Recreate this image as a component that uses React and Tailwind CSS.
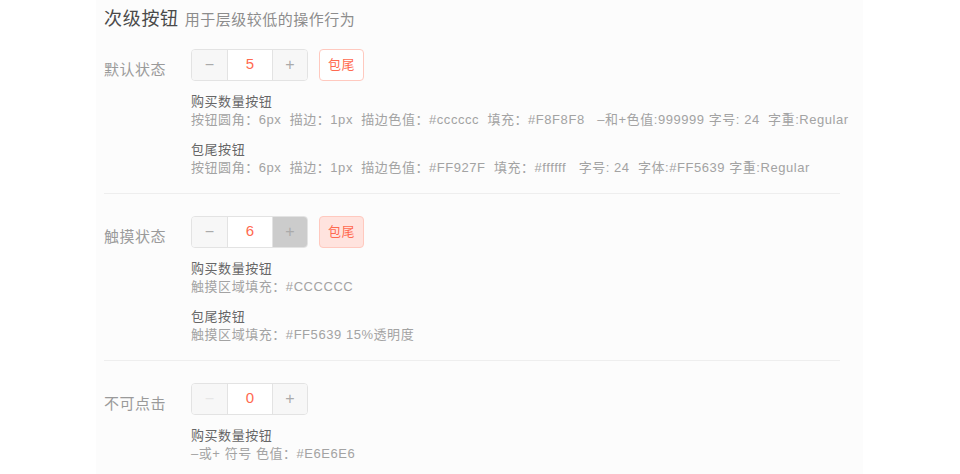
import React from "react";

const font = { fontFamily: '"Liberation Sans", "Noto Sans CJK SC", sans-serif' };

const Stepper = ({ value, hover, disabled }) => (
  <div className="flex h-[32px] w-[117px] rounded-[4px] border border-[#e3e3e3] overflow-hidden">
    <div className={`w-[36px] flex items-center justify-center bg-[#f7f7f7] border-r border-[#e3e3e3] text-[16px] ${disabled ? "text-[#e6e6e6]" : "text-[#aaaaaa]"}`}>−</div>
    <div className="flex-1 flex items-center justify-center bg-white text-[15px] text-[#ff6a50]">{value}</div>
    <div className={`w-[35px] flex items-center justify-center border-l border-[#e3e3e3] text-[16px] text-[#aaaaaa] ${hover ? "bg-[#cccccc]" : "bg-[#f7f7f7]"}`}>+</div>
  </div>
);

const TailButton = ({ hover }) => (
  <div className={`ml-[11px] h-[32px] w-[45px] flex items-center justify-center rounded-[4px] border border-[#ffc9bf] text-[13px] tracking-[0.5px] text-[#ff6a50] ${hover ? "bg-[#ffe3de]" : "bg-white"}`}>包尾</div>
);

const Desc = ({ title, lines }) => (
  <div className="text-[13px] leading-[18px] tracking-[0.55px]">
    <div className="text-[#666666]">{title}</div>
    {lines.map((l, i) => (
      <div key={i} className="text-[#a3a3a3] whitespace-pre">{l}</div>
    ))}
  </div>
);

const Section = ({ label, children, descs, divider }) => (
  <div className={`flex pt-[22px] pb-[16px] ${divider ? "border-b border-[#eeeeee]" : ""}`}>
    <div className="w-[87px] shrink-0 pt-[12px] text-[15px] leading-[18px] tracking-[0.5px] text-[#9a9a9a]">{label}</div>
    <div className="flex flex-col">
      <div className="flex">{children}</div>
      <div className="mt-[12px] flex flex-col gap-[12px]">
        {descs.map((d, i) => (
          <Desc key={i} title={d.title} lines={d.lines} />
        ))}
      </div>
    </div>
  </div>
);

export default function App() {
  return (
    <div className="w-[960px] h-[474px] bg-white overflow-hidden" style={font}>
      <div className="ml-[96px] w-[767px] h-full bg-[#fcfcfc] pl-[8px]">
        <div className="w-[736px]">
          <div className="pt-[7px] flex items-baseline">
            <span className="text-[18px] leading-[24px] tracking-[0.7px] text-[#4a4a4a]">次级按钮</span>
            <span className="ml-[6px] text-[15px] tracking-[0.5px] text-[#8c8c8c]">用于层级较低的操作行为</span>
          </div>
          <div className="-mt-[5px]">
            <Section
              label="默认状态"
              divider
              descs={[
                {
                  title: "购买数量按钮",
                  lines: ["按钮圆角：6px  描边：1px  描边色值：#cccccc  填充：#F8F8F8   –和+色值:999999 字号: 24  字重:Regular"],
                },
                {
                  title: "包尾按钮",
                  lines: ["按钮圆角：6px  描边：1px  描边色值：#FF927F  填充：#ffffff   字号: 24  字体:#FF5639 字重:Regular"],
                },
              ]}
            >
              <Stepper value="5" />
              <TailButton />
            </Section>
            <Section
              label="触摸状态"
              divider
              descs={[
                { title: "购买数量按钮", lines: ["触摸区域填充：#CCCCCC"] },
                { title: "包尾按钮", lines: ["触摸区域填充：#FF5639 15%透明度"] },
              ]}
            >
              <Stepper value="6" hover />
              <TailButton hover />
            </Section>
            <Section
              label="不可点击"
              descs={[{ title: "购买数量按钮", lines: ["–或+ 符号 色值：#E6E6E6"] }]}
            >
              <Stepper value="0" disabled />
            </Section>
          </div>
        </div>
      </div>
    </div>
  );
}
